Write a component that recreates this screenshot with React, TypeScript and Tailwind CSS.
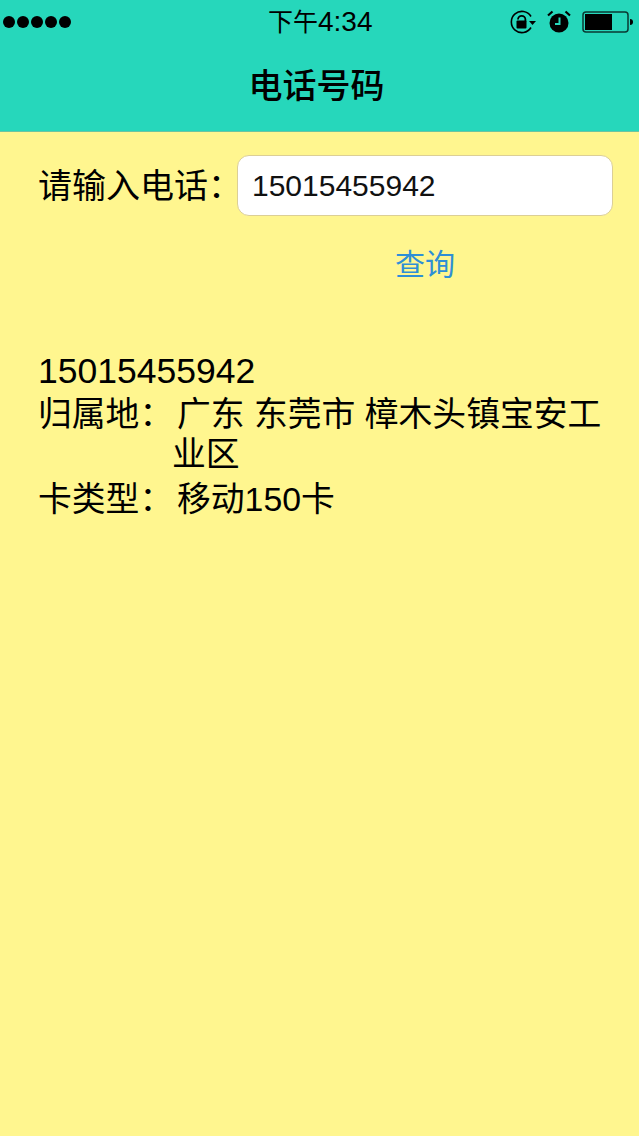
const cjk = "font-['Liberation_Sans','Noto_Sans_CJK_SC',sans-serif]";

function StatusIcons() {
  return (
    <div className="flex items-center">
      <svg width="30" height="26" viewBox="0 0 30 26" className="mr-[7px]">
        <path d="M22 18.5A10.6 10.6 0 1 1 22 7.5" fill="none" stroke="#000" strokeWidth="1.6" />
        <path d="M9 10.5a3.7 3.7 0 0 1 7.4 0v2" fill="none" stroke="#000" strokeWidth="1.8" />
        <rect x="7.5" y="11.5" width="10" height="8" rx="1" fill="#000" />
        <path d="M20 12h7l-3.5 4z" fill="#000" />
      </svg>
      <svg width="26" height="26" viewBox="0 0 26 26" className="mr-[10px]">
        <circle cx="13" cy="14" r="9.5" fill="#000" />
        <path d="M13.5 8.5v6.5H9" fill="none" stroke="#26d7bb" strokeWidth="2" />
        <path d="M2 6.5 6.5 2.5M24 6.5 19.5 2.5" stroke="#000" strokeWidth="2.2" />
      </svg>
      <svg width="52" height="24" viewBox="0 0 52 24">
        <rect x="1" y="2" width="45" height="20" rx="3" fill="none" stroke="#0a3a33" strokeWidth="1.5" />
        <rect x="3" y="4" width="27" height="16" fill="#000" />
        <path d="M48 9c2 0 3 1 3 3s-1 3-3 3z" fill="#000" />
      </svg>
    </div>
  );
}

export default function App() {
  return (
    <div className={`min-h-screen bg-[#fff68f] text-black ${cjk}`}>
      <header className="h-[132px] bg-[#26d7bb] border-b border-[#6fc4a0]">
        <div className="relative flex h-[44px] items-center justify-between pl-[3px] pr-[5px]">
          <div className="flex gap-[2px]">
            <span className="h-[12px] w-[12px] rounded-full bg-black" />
            <span className="h-[12px] w-[12px] rounded-full bg-black" />
            <span className="h-[12px] w-[12px] rounded-full bg-black" />
            <span className="h-[12px] w-[12px] rounded-full bg-black" />
            <span className="h-[12px] w-[12px] rounded-full bg-black" />
          </div>
          <span className="absolute left-[268px] top-[5px] text-[25px] leading-[34px]">
            下午<span className="text-[28px]">4:34</span>
          </span>
          <StatusIcons />
        </div>
        <h1 className="pt-[20px] pr-[6px] text-center text-[34px] leading-[44px] font-medium">电话号码</h1>
      </header>

      <main className="pl-[38px] pr-[26px] pt-[23px]">
        <div className="flex items-center">
          <label className="w-[199px] shrink-0 whitespace-nowrap text-[34px] leading-[60px]">请输入电话：</label>
          <div className="flex h-[61px] flex-1 items-center rounded-[12px] border border-[#dccf96] bg-white pl-[14px] text-[30px] text-[#111]">
            15015455942
          </div>
        </div>

        <div className="mt-[24px] pl-[357px] text-[30px] leading-[50px] text-[#2f8fd6]">查询</div>

        <div className="mt-[61px] text-[35.5px] leading-[40px]">
          <div>15015455942</div>
          <div className="mt-[3px] flex text-[33.8px]">
            <span className="w-[134px] shrink-0 whitespace-nowrap">归属地：</span>
            <span className="whitespace-nowrap">
              <span className="pl-[5px]">广东 东莞市 樟木头镇宝安工</span>
              <br />
              业区
            </span>
          </div>
          <div className="mt-[5px] flex text-[33.8px]">
            <span className="w-[139px] shrink-0 whitespace-nowrap">卡类型：</span>
            <span>移动150卡</span>
          </div>
        </div>
      </main>
    </div>
  );
}
